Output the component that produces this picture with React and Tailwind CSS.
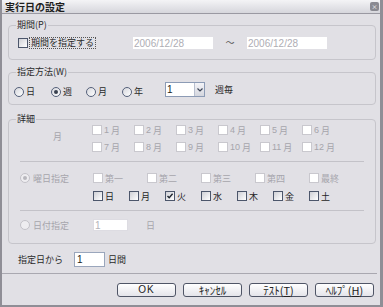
import React from "react";

const jp = "font-['Noto_Sans_CJK_JP','Liberation_Sans',sans-serif]";

function Check({ checked, disabled }) {
  if (disabled) {
    return <span className="w-[10px] h-[10px] shrink-0 border border-[#c9c8ce] bg-white" />;
  }
  return (
    <span className="relative w-[10px] h-[10px] shrink-0 border border-[#4c566b] bg-gradient-to-br from-[#cfd0d6] to-white">
      {checked && (
        <svg viewBox="0 0 8 8" className="absolute inset-0 w-[8px] h-[8px]">
          <path d="M1.5 4 L3.2 5.8 L6.6 1.8" fill="none" stroke="#1f2630" strokeWidth="1.4" />
        </svg>
      )}
    </span>
  );
}

function Radio({ checked, disabled }) {
  return (
    <span
      className={
        "w-[10px] h-[10px] shrink-0 rounded-full border flex items-center justify-center " +
        (disabled ? "border-[#c3c2c8] bg-[#eeedf0]" : "border-[#55607a] bg-gradient-to-br from-[#d6d7dd] to-white")
      }
    >
      {checked && (
        <span className={"w-[4px] h-[4px] rounded-full " + (disabled ? "bg-[#b8b7bd]" : "bg-[#3a4150]")} />
      )}
    </span>
  );
}

function Group({ label, children, className }) {
  return (
    <fieldset className={"border border-[#c6c5cb] rounded-[4px] " + className}>
      <legend className="ml-[7px] px-[1px] leading-[12px] text-[#2a2a2a]">{label}</legend>
      {children}
    </fieldset>
  );
}

function Btn({ children }) {
  return (
    <div className="w-[59px] h-[14px] rounded-[3px] border border-[#4f5566] bg-gradient-to-b from-white to-[#e4e4ea] flex items-center justify-center text-[11px] leading-none text-[#222]">
      {children}
    </div>
  );
}

const months = ["1", "2", "3", "4", "5", "6", "7", "8", "9", "10", "11", "12"];
const weeks = ["第一", "第二", "第三", "第四", "最終"];
const days = ["日", "月", "火", "水", "木", "金", "土"];

export default function App() {
  return (
    <div className={"w-[383px] h-[307px] bg-[#e1e0e5] flex flex-col border-l-[2px] border-r-[3px] border-b-[2px] border-[#8f8e96] text-[9px] text-[#2a2a2a] " + jp}>
      {/* title bar */}
      <div className="h-[14px] shrink-0 flex items-center justify-between pl-[3px] pr-[1px] bg-gradient-to-b from-[#f4f4f6] to-[#d6d6dc] border-b border-[#9a99a2]">
        <span className="text-[10px] font-bold leading-none text-[#1e1e1e]">実行日の設定</span>
        <span className="w-[9px] h-[9px] rounded-[2px] bg-[#8a8a92] flex items-center justify-center text-[6px] text-white leading-none">×</span>
      </div>

      <div className="flex flex-col pl-[6px] pr-[4px]">
        {/* period */}
        <Group label="期間(P)" className="mt-[5px] h-[41px]">
          <div className="mt-[6px] h-[12px] flex items-center pl-[9px]">
            <div className="w-[115px] flex items-center">
              <Check />
              <span className="ml-[1px] px-[1px] border border-dotted border-[#555] leading-[10px]">期間を指定する</span>
            </div>
            <div className="w-[80px] h-[12px] bg-white flex items-center pl-[1px] font-['Liberation_Sans'] text-[10px] text-[#aeadb4]">2006/12/28</div>
            <div className="w-[34px] flex items-center justify-center text-[#555]">～</div>
            <div className="w-[80px] h-[12px] bg-white flex items-center pl-[1px] font-['Liberation_Sans'] text-[10px] text-[#aeadb4]">2006/12/28</div>
          </div>
        </Group>

        {/* method */}
        <Group label="指定方法(W)" className="mt-[6px] h-[39px]">
          <div className="mt-[4px] flex items-start pl-[5px]">
            {[["日", 37, false], ["週", 35, true], ["月", 36, false], ["年", 43, false]].map(([t, w, c]) => (
              <div key={t} className="mt-[5px] flex items-center gap-[2px]" style={{ width: w }}>
                <Radio checked={c} />
                <span className="leading-[10px]">{t}</span>
              </div>
            ))}
            <div className="w-[40px] h-[15px] bg-white border border-[#8c9bb5] flex items-center">
              <span className="flex-1 pl-[1px] font-['Liberation_Sans'] text-[10px] leading-none text-[#222]">1</span>
              <span className="w-[10px] h-[13px] bg-gradient-to-b from-[#f4f4f8] to-[#d4d6de] border-l border-[#b8bfcf] flex items-center justify-center">
                <svg viewBox="0 0 6 4" className="w-[6px] h-[4px]">
                  <path d="M0.5 0.5 L3 3 L5.5 0.5" fill="none" stroke="#3c4456" strokeWidth="1.2" />
                </svg>
              </span>
            </div>
            <span className="ml-[10px] mt-[3px] leading-[10px]">週毎</span>
          </div>
        </Group>

        {/* detail */}
        <Group label="詳細" className="mt-[8px] h-[131px]">
          <div className="flex">
            <div className="w-[83px] pl-[44px] pt-[5px] text-[#a6a5ac]">月</div>
            <div className="grid grid-cols-6 gap-y-[7px] w-[252px]">
              {months.map((m) => (
                <div key={m} className="h-[10px] flex items-center gap-[2px] text-[#a6a5ac]">
                  <Check disabled />
                  <span className="leading-none font-['Liberation_Sans'] text-[9px]">{m}</span>
                  <span className="leading-none">月</span>
                </div>
              ))}
            </div>
          </div>

          <div className="mt-[9px] mx-[11px] border-t border-[#c3c2c8]" />

          <div className="mt-[11px] flex items-center pl-[11px] h-[10px]">
            <div className="w-[73px] flex items-center gap-[3px] text-[#a6a5ac]">
              <Radio checked disabled />
              <span className="leading-none">曜日指定</span>
            </div>
            {weeks.map((w) => (
              <div key={w} className="w-[54px] flex items-center gap-[2px] text-[#a6a5ac]">
                <Check disabled />
                <span className="leading-none">{w}</span>
              </div>
            ))}
          </div>
          <div className="mt-[8px] flex items-center pl-[84px] h-[10px]">
            {days.map((d) => (
              <div key={d} className="w-[36px] flex items-center gap-[2px]">
                <Check checked={d === "火"} />
                <span className="leading-none text-[#1e1e1e]">{d}</span>
              </div>
            ))}
          </div>

          <div className="mt-[9px] mx-[11px] border-t border-[#c3c2c8]" />

          <div className="mt-[8px] flex items-center pl-[11px] h-[12px] text-[#a6a5ac]">
            <div className="w-[73px] flex items-center gap-[3px]">
              <Radio disabled />
              <span className="leading-none">日付指定</span>
            </div>
            <div className="w-[35px] h-[12px] bg-white border border-[#dddce2] flex items-center pl-[1px] font-['Liberation_Sans'] text-[10px] text-[#b4b3ba]">1</div>
            <span className="ml-[18px] leading-none">日</span>
          </div>
        </Group>

        {/* from */}
        <div className="mt-[8px] flex items-center h-[15px] pl-[10px]">
          <span className="w-[56px] leading-none">指定日から</span>
          <div className="w-[31px] h-[15px] bg-white border border-[#9aa6bc] flex items-center pl-[2px] font-['Liberation_Sans'] text-[10px] text-[#222]">1</div>
          <span className="ml-[3px] leading-none">日間</span>
        </div>
      </div>

      <div className="mt-[6px] mr-[3px] border-t border-[#a9a8b0]" />

      <div className="mt-[9px] flex justify-end gap-[7px] pr-[6px]">
        <Btn>
          <span className="font-['Liberation_Sans'] text-[10px] tracking-[1px]">OK</span>
        </Btn>
        <Btn>ｷｬﾝｾﾙ</Btn>
        <Btn>
          ﾃｽﾄ(<span className="underline">T</span>)
        </Btn>
        <Btn>
          ﾍﾙﾌﾟ(<span className="underline">H</span>)
        </Btn>
      </div>
    </div>
  );
}
